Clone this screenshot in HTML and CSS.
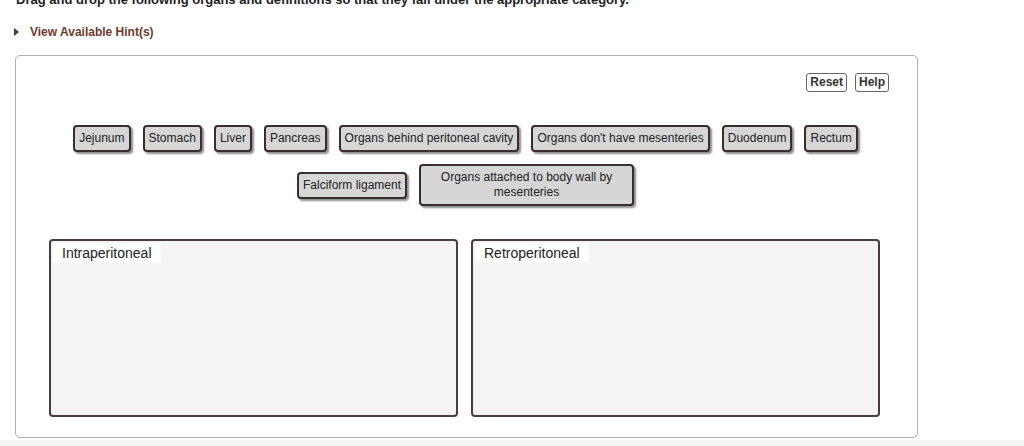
FILE: index.html
```html
<!DOCTYPE html>
<html lang="en">
<head>
  <meta charset="UTF-8" />
  <meta name="viewport" content="width=device-width,initial-scale=1.0" />
  <title>Drag and Drop</title>
  <link rel="stylesheet" href="styles.css">
</head>
<body>
  <div class="page">
    <p class="prompt">Drag and drop the following organs and definitions so that they fall under the appropriate category.</p>
    <div class="hint">
      <span class="arrow"></span>
      <span>View Available Hint(s)</span>
    </div>
    <section class="panel">
      <div class="toolbar">
        <button class="tool-btn" type="button">Reset</button>
        <button class="tool-btn" type="button">Help</button>
      </div>
      <div class="chips">
        <div class="chip">Jejunum</div>
        <div class="chip">Stomach</div>
        <div class="chip">Liver</div>
        <div class="chip">Pancreas</div>
        <div class="chip">Organs behind peritoneal cavity</div>
        <div class="chip">Organs don't have mesenteries</div>
        <div class="chip">Duodenum</div>
        <div class="chip">Rectum</div>
        <div class="chip">Falciform ligament</div>
        <div class="chip">Organs attached to body wall by mesenteries</div>
      </div>
      <div class="zones">
        <div class="zone">
          <div class="zone-label">Intraperitoneal</div>
        </div>
        <div class="zone">
          <div class="zone-label">Retroperitoneal</div>
        </div>
      </div>
    </section>
  </div>
  <div class="footer"></div>
</body>
</html>
```

FILE: styles.css
```css
body {
  margin: 0;
  background: #fff;
  color: #222;
  font-family: "Liberation Sans", Arial, sans-serif;
  overflow: hidden;
}
.page {
  padding: 0 106px 0 15px;
}
.prompt {
  margin: -8px 0 0 1px;
  font-size: 13px;
  font-weight: bold;
  line-height: 16px;
  color: #222;
}
.hint {
  display: flex;
  align-items: center;
  gap: 11px;
  height: 16px;
  margin: 16px 0 15px -2px;
  font-size: 12px;
  font-weight: bold;
  color: #6e3a28;
}
.arrow {
  width: 0;
  height: 0;
  border-top: 4px solid transparent;
  border-bottom: 4px solid transparent;
  border-left: 5px solid #4a3a36;
  margin-left: 1px;
}
.panel {
  border: 1px solid #b0b0b0;
  border-radius: 5px;
  padding: 17px 37px 20px 33px;
  height: 344px;
}
.toolbar {
  display: flex;
  justify-content: flex-end;
  gap: 8px;
  margin-right: -9px;
}
.tool-btn {
  font-family: "Liberation Sans", Arial, sans-serif;
  font-size: 12px;
  font-weight: bold;
  color: #333;
  background: #fff;
  border: 1px solid #666;
  border-radius: 3px;
  height: 19px;
  padding: 0 3px;
  line-height: 17px;
}
.chips {
  display: flex;
  flex-wrap: wrap;
  justify-content: center;
  align-items: center;
  gap: 12px;
  margin: 33px 0 0 0;
  padding: 0 12px 0 14px;
}
.chip {
  box-sizing: border-box;
  max-width: 215px;
  padding: 4px 4px;
  font-size: 12px;
  line-height: 15px;
  text-align: center;
  background: #d6d6d6;
  border: 2px solid #3b2c2d;
  border-radius: 4px;
  box-shadow: 2px 2px 2px rgba(0, 0, 0, 0.45);
  color: #222;
}
.zones {
  display: grid;
  grid-template-columns: 409px 409px;
  gap: 13px;
  margin-top: 33px;
}
.zone {
  box-sizing: border-box;
  height: 178px;
  background: #f4f4f4;
  border: 2px solid #4a3b3c;
  border-radius: 4px;
}
.zone-label {
  display: inline-block;
  margin: 2px 0 0 2px;
  padding: 0 9px;
  height: 20px;
  line-height: 20px;
  font-size: 14px;
  background: #fff;
  color: #222;
}
.footer {
  margin-top: 2px;
  height: 10px;
  background: #f4f4f4;
}
```
